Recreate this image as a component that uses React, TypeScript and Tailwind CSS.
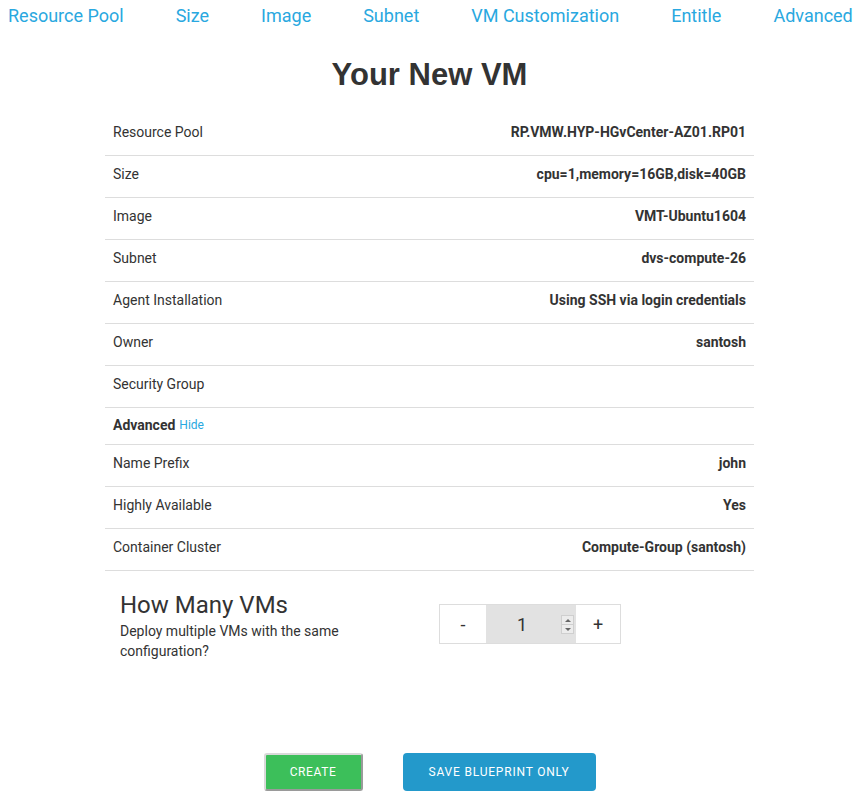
const steps = ["Resource Pool", "Size", "Image", "Subnet", "VM Customization", "Entitle", "Advanced"];

const summary = [
  { label: "Resource Pool", value: "RP.VMW.HYP-HGvCenter-AZ01.RP01" },
  { label: "Size", value: "cpu=1,memory=16GB,disk=40GB" },
  { label: "Image", value: "VMT-Ubuntu1604" },
  { label: "Subnet", value: "dvs-compute-26" },
  { label: "Agent Installation", value: "Using SSH via login credentials" },
  { label: "Owner", value: "santosh" },
  { label: "Security Group", value: "" },
];

const advanced = [
  { label: "Name Prefix", value: "john" },
  { label: "Highly Available", value: "Yes" },
  { label: "Container Cluster", value: "Compute-Group (santosh)" },
];

function Row({ label, value }: { label: string; value: string }) {
  return (
    <div className="flex h-[42px] items-center justify-between border-b border-[#dddddd] px-2 pb-[4px] text-[14px]">
      <span>{label}</span>
      <span className="font-bold">{value}</span>
    </div>
  );
}

export default function App() {
  return (
    <div className="min-h-[807px] w-[859px] bg-white text-[#333333]" style={{ fontFamily: "Roboto, 'Noto Sans', sans-serif" }}>
      {/* wizard steps */}
      <nav className="flex h-[31px] items-center gap-[52px] pl-2 text-[18px] text-[#29a8e0]">
        {steps.map((s) => (
          <span key={s} className="whitespace-nowrap">{s}</span>
        ))}
      </nav>

      <h1 className="mt-[21px] text-center text-[31px] font-bold leading-[46px]" style={{ fontFamily: "'Liberation Sans', Arial, sans-serif" }}>
        Your New VM
      </h1>

      <div className="mx-auto mt-[16px] w-[649px]">
        {summary.map((r) => (
          <Row key={r.label} {...r} />
        ))}
        <div className="flex h-[37px] items-center border-b border-[#dddddd] px-2 pb-[2px] text-[14px]">
          <span className="font-bold">Advanced</span>
          <span className="ml-1 text-[12px] text-[#29a8e0]">Hide</span>
        </div>
        {advanced.map((r) => (
          <Row key={r.label} {...r} />
        ))}

        <div className="mt-[18px] flex items-start pl-[15px]">
          <div className="w-[319px]">
            <h2 className="text-[24px] leading-[32px]">How Many VMs</h2>
            <p className="w-[240px] text-[14px] leading-[20px]">Deploy multiple VMs with the same configuration?</p>
          </div>
          <div className="mt-[15px] flex h-[40px] w-[182px] border border-[#dddddd]">
            <button className="w-[46px] bg-white text-[18px]">-</button>
            <div className="relative flex w-[90px] items-center justify-center bg-[#e2e2e2] pr-[18px] text-[18px]">
              1
              <div className="absolute right-[2px] top-[10px] flex h-[19px] w-[13px] flex-col border border-[#cfcfcf] bg-[#ececec]">
                <span className="flex flex-1 items-center justify-center border-b border-[#cfcfcf]">
                  <span className="h-0 w-0 border-x-[3px] border-b-[3px] border-x-transparent border-b-[#666]" />
                </span>
                <span className="flex flex-1 items-center justify-center">
                  <span className="h-0 w-0 border-x-[3px] border-t-[3px] border-x-transparent border-t-[#666]" />
                </span>
              </div>
            </div>
            <button className="flex-1 bg-white text-[18px]">+</button>
          </div>
        </div>
      </div>

      <div className="mt-[92px] flex justify-center gap-[40px]">
        <button className="h-[38px] w-[99px] rounded-[3px] border-[2px] border-[#d9d9d9] border-b-[#9a9a9a] border-r-[#9a9a9a] bg-[#3cbf5a] text-[12px] tracking-[0.6px] text-white">
          CREATE
        </button>
        <button className="h-[38px] w-[193px] rounded-[4px] bg-[#2399cb] text-[12px] tracking-[0.8px] text-white">
          SAVE BLUEPRINT ONLY
        </button>
      </div>
    </div>
  );
}
